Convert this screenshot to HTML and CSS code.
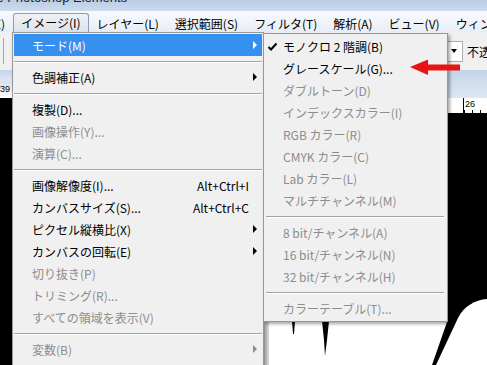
FILE: index.html
```html
<!DOCTYPE html>
<html lang="ja">
<head>
    <meta charset="UTF-8">
    <title>イメージ メニュー</title>
    <link rel="stylesheet" href="styles.css">
</head>
<body>
<div class="app">
    <div class="titlebar"><span>Adobe Photoshop Elements</span></div>

    <div class="menubar">
        <div class="mb-item cut">編集(E)</div>
        <div class="mb-item open">イメージ(I)</div>
        <div class="mb-item">レイヤー(L)</div>
        <div class="mb-item">選択範囲(S)</div>
        <div class="mb-item">フィルタ(T)</div>
        <div class="mb-item">解析(A)</div>
        <div class="mb-item">ビュー(V)</div>
        <div class="mb-item">ウィンドウ(W)</div>
    </div>

    <div class="options">
        <div class="grip"></div>
        <div class="combo"><span class="drop"></span></div>
        <div class="label">不透明度:</div>
    </div>

    <div class="docs">
        <div class="doc doc-left">
            <div class="doc-head"></div>
            <div class="ruler"><span class="mark">39</span></div>
            <div class="canvas"></div>
        </div>
        <div class="doc doc-right">
            <div class="doc-head"></div>
            <div class="ruler"><span class="mark">26</span></div>
            <div class="canvas">
                <svg width="218" height="252" viewBox="269 113 218 252">
                    <rect x="269" y="113" width="218" height="252" fill="#000"/>
                    <polygon points="269,200 440,200 447,322 432,365 269,365" fill="#fff"/>
                    <path d="M487,299 C475,300 464,306 458,318 L436,365 L487,365 Z" fill="#fff"/>
                    <polygon points="292,321 295,321 294,334 293,334" fill="#000"/>
                    <polygon points="322,321 329,321 327,340 325,356 324,340" fill="#000"/>
                </svg>
            </div>
        </div>
    </div>

    <div class="menu main-menu">
        <div class="item sub active">モード(M)</div>
        <div class="sep"></div>
        <div class="item sub">色調補正(A)</div>
        <div class="sep"></div>
        <div class="item">複製(D)...</div>
        <div class="item disabled">画像操作(Y)...</div>
        <div class="item disabled">演算(C)...</div>
        <div class="sep"></div>
        <div class="item">画像解像度(I)...<span class="key">Alt+Ctrl+I</span></div>
        <div class="item">カンバスサイズ(S)...<span class="key">Alt+Ctrl+C</span></div>
        <div class="item sub">ピクセル縦横比(X)</div>
        <div class="item sub">カンバスの回転(E)</div>
        <div class="item disabled">切り抜き(P)</div>
        <div class="item disabled">トリミング(R)...</div>
        <div class="item disabled">すべての領域を表示(V)</div>
        <div class="sep"></div>
        <div class="item sub disabled">変数(B)</div>
    </div>

    <div class="menu sub-menu">
        <div class="item checked">
            <svg class="check" width="12" height="10" viewBox="0 0 12 10"><path d="M1.5,5 L4,7.5 L9.5,1.5" fill="none" stroke="#000" stroke-width="2"/></svg>
            モノクロ 2 階調(B)
        </div>
        <div class="item">グレースケール(G)...</div>
        <div class="item disabled">ダブルトーン(D)</div>
        <div class="item disabled">インデックスカラー(I)</div>
        <div class="item disabled">RGB カラー(R)</div>
        <div class="item disabled">CMYK カラー(C)</div>
        <div class="item disabled">Lab カラー(L)</div>
        <div class="item disabled">マルチチャンネル(M)</div>
        <div class="sep"></div>
        <div class="item disabled">8 bit/チャンネル(A)</div>
        <div class="item disabled">16 bit/チャンネル(N)</div>
        <div class="item disabled">32 bit/チャンネル(H)</div>
        <div class="sep"></div>
        <div class="item disabled">カラーテーブル(T)...</div>
    </div>

    <svg class="pointer" width="54" height="18" viewBox="408 58 54 18">
        <path d="M410,67 L428,59.5 L428,64.5 L460,64.5 L460,70.5 L428,70.5 L428,75 Z" fill="#e81414"/>
    </svg>
</div>
</body>
</html>
```

FILE: styles.css
```css
body {
    margin: 0;
    font-family: "Noto Sans CJK JP", "Noto Sans", sans-serif;
    font-size: 12px;
    color: #000;
}
.app {
    position: relative;
    width: 487px;
    height: 365px;
    overflow: hidden;
    background: #f0f0f0;
}

/* window title, cut off at the top of the shot */
.titlebar {
    height: 11px;
    overflow: hidden;
    background: linear-gradient(#bacde5, #cddbec);
    white-space: nowrap;
}
.titlebar span {
    display: block;
    margin: -9px 0 0 -34px;
    font-family: "Liberation Sans", sans-serif;
    font-size: 13px;
    line-height: 14px;
    color: #222;
}

/* menu bar */
.menubar {
    height: 21px;
    display: flex;
    align-items: flex-end;
    white-space: nowrap;
    background: linear-gradient(#f8fafd, #e8eef6);
}
.mb-item {
    flex-shrink: 0;
    height: 17px;
    line-height: 17px;
    padding: 0 7px;
    border: 1px solid transparent;
    border-bottom: none;
}
.mb-item.cut {
    margin-left: -42px;
}
.mb-item.open {
    height: 18px;
    border: 1px solid #8d9cb2;
    border-bottom: none;
    border-radius: 3px 3px 0 0;
    background: linear-gradient(#eef1f5, #dfe4ea);
}

/* options bar */
.options {
    height: 38px;
    display: flex;
    align-items: center;
    padding-left: 3px;
    white-space: nowrap;
    overflow: hidden;
}
.options > div {
    flex-shrink: 0;
}
.grip {
    height: 26px;
    border-left: 1px solid #a7a7a7;
}
.combo {
    width: 61px;
    height: 19px;
    margin-left: 396px;
    display: flex;
    justify-content: flex-end;
    align-items: center;
    background: #fff;
    border: 1px solid #abadb3;
}
.drop {
    width: 0;
    height: 0;
    margin-right: 5px;
    border-top: 4px solid #000;
    border-left: 3px solid transparent;
    border-right: 3px solid transparent;
}
.label {
    margin-left: 4px;
}

/* document windows */
.docs {
    display: flex;
    height: 295px;
}
.doc {
    display: flex;
    flex-direction: column;
}
.doc-left {
    width: 264px;
}
.doc-right {
    flex: 1;
    border-left: 5px solid #d6d6d6;
}
.doc-head {
    height: 28px;
    background: linear-gradient(#c3d4e9, #dee8f3);
}
.doc-left .doc-head {
    height: 11px;
}
.ruler {
    height: 15px;
    background: #fff repeating-linear-gradient(to right, #000 0 1px, transparent 1px 8px) 195px 100% / 100% 3px no-repeat;
    font-family: "Liberation Sans", sans-serif;
    font-size: 9px;
    line-height: 12px;
}
.doc-left .ruler {
    height: 17px;
    background: linear-gradient(#d5e1ef, #fff);
}
.doc-right .ruler {
    padding-left: 194px;
}
.mark {
    display: inline-block;
    height: 15px;
    padding-left: 1px;
    border-left: 1px solid #000;
}
.doc-left .mark {
    border: none;
    margin-left: -1px;
    padding-top: 2px;
}
.canvas {
    flex: 1;
    background: #000;
    overflow: hidden;
}
.canvas svg {
    display: block;
}

/* drop-down menus */
.menu {
    position: absolute;
    background: #f0f0f0;
    border: 1px solid #979797;
    padding: 1px;
    box-shadow: 2px 2px 3px rgba(0, 0, 0, 0.35);
}
.main-menu {
    left: 12px;
    top: 32px;
    width: 248px;
    bottom: -20px;
}
.sub-menu {
    left: 263px;
    top: 33px;
    width: 181px;
    padding-bottom: 2px;
}
.item {
    position: relative;
    display: flex;
    height: 21px;
    padding: 1px 13px 0 18px;
    line-height: 21px;
    white-space: nowrap;
}
.item .key {
    margin-left: auto;
}
.item.disabled {
    color: #8d8d8d;
}
.item.active {
    background: #3590ef;
    color: #fff;
}
.item.sub::after {
    content: "";
    position: absolute;
    right: 5px;
    top: 7px;
    border-left: 4px solid #000;
    border-top: 4px solid transparent;
    border-bottom: 4px solid transparent;
}
.item.sub.active::after {
    border-left-color: #fff;
}
.item.sub.disabled::after {
    border-left-color: #8d8d8d;
}
.check {
    position: absolute;
    left: 2px;
    top: 7px;
}
.sep {
    height: 5px;
    padding-top: 5px;
}
.sep::before {
    content: "";
    display: block;
    border-top: 1px solid #a3a3a3;
    border-bottom: 1px solid #fff;
}
.sub-menu .sep::before {
    margin: 0 2px 0 1px;
}

.pointer {
    position: absolute;
    left: 408px;
    top: 58px;
}
```
